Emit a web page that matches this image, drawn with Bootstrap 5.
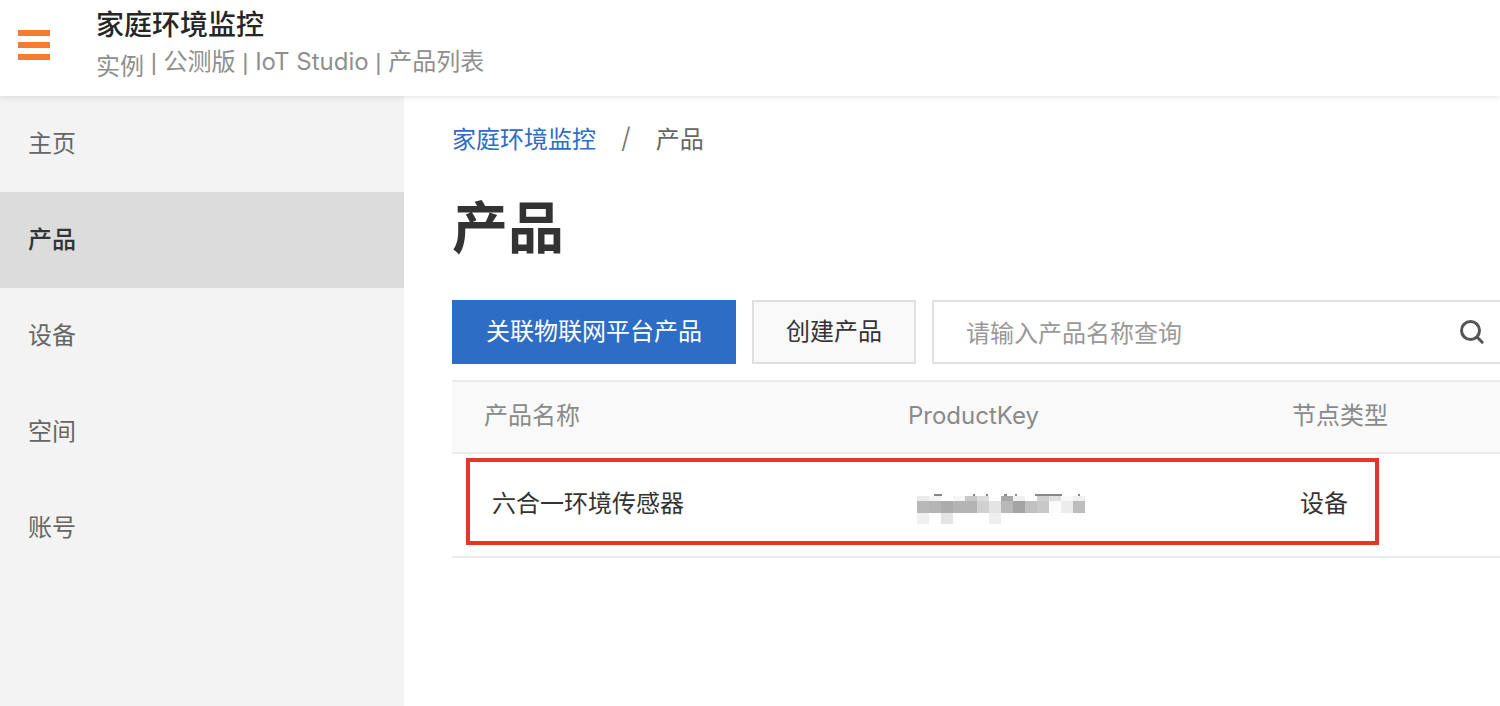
<!DOCTYPE html>
<html lang="zh-CN">
<head>
    <meta charset="UTF-8">
    <meta name="viewport" content="width=device-width, initial-scale=1.0">
    <title>家庭环境监控</title>
    <link rel="stylesheet" href="https://cdn.jsdelivr.net/npm/bootstrap@5.3.2/dist/css/bootstrap.min.css">
    <style>
        html, body { height: 100%; overflow: hidden; }
        body {
            font-family: Inter, "Noto Sans CJK SC", sans-serif;
            font-size: 24px;
            color: #333;
            background: #fff;
        }
        .app-top {
            height: 96px;
            padding-left: 18px;
            background: #fff;
            box-shadow: 0 1px 6px rgba(0, 0, 0, .12);
            position: relative;
        }
        .burger { width: 32px; margin-right: 46px; margin-top: 30px; }
        .burger i { display: block; height: 6px; margin-bottom: 6px; background: #f37b32; }
        .app-head { padding-top: 8px; }
        .app-title { font-size: 28px; line-height: 34px; font-weight: 500; color: #262626; }
        .app-sub { font-family: "Liberation Sans", "Noto Sans CJK SC", sans-serif; font-size: 24px; line-height: 36px; color: #8f8f8f; margin-top: 2px; }
        .app-sub .sub-low { vertical-align: -5px; }
        .app-sub .sub-latin { font-family: Inter, sans-serif; }
        .app-body { height: 610px; }
        .side { width: 404px; background: #f3f3f3; flex: none; }
        .side a { display: block; height: 96px; line-height: 96px; padding-left: 28px; color: #666; text-decoration: none; }
        .side a.on { background: #dcdcdc; color: #333; font-weight: 500; }
        .main-pane { padding-left: 48px; min-width: 0; }
        .crumbs { height: 86px; line-height: 88px; color: #666; }
        .crumbs a { color: #2e6dc5; text-decoration: none; }
        .crumbs em { font-style: normal; font-size: 28px; line-height: 1; font-weight: 300; color: #777; margin: 0 25px; }
        .page-h { font-size: 56px; line-height: 64px; font-weight: 700; color: #333; margin: 14px 0 40px; }
        .tools { height: 64px; gap: 16px; }
        .tools .btn { height: 64px; border-radius: 0; font-size: 24px; padding: 0; }
        .btn-link-prod { width: 284px; background: #2e6dc5; border: 0; color: #fff; }
        .btn-new-prod { width: 164px; background: #f9f9f9; border: 2px solid #e0e0e0; color: #333; }
        .search-box { flex: 1; border: 2px solid #e0e0e0; padding: 0 15px 0 32px; margin-right: -20px; }
        .search-box input { border: 0; outline: 0; flex: 1; min-width: 0; padding: 4px 0 0 0; font-size: 24px; color: #333; background: none; }
        .search-box input::placeholder { color: #999; opacity: 1; }
        .search-ico { margin-right: 18px; }
        .prod-table { margin-top: 16px; font-size: 24px; }
        .prod-head { height: 74px; padding-bottom: 2px; background: #f9f9f9; border-top: 2px solid #ebebeb; border-bottom: 2px solid #ebebeb; color: #8a8a8a; }
        .prod-row { height: 104px; border-bottom: 2px solid #ebebeb; color: #333; position: relative; }
        .cell-a { width: 456px; flex: none; }
        .cell-b { width: 384px; flex: none; }
        .prod-head .cell-a { padding-left: 32px; }
        .prod-row .cell-a { padding-left: 40px; padding-bottom: 2px; }
        .prod-row .cell-b { padding-left: 9px; }
        .prod-row .cell-c { padding-left: 8px; padding-bottom: 2px; }
        .mosaic { display: block; width: 171px; height: 38px; }
        .red-mark { position: absolute; left: 14px; top: 4px; width: 913px; height: 87px; border: 4px solid #e8352a; }
    </style>
</head>
<body>
    <!-- Top bar -->
    <header class="app-top d-flex align-items-start">
        <div class="burger"><i></i><i></i><i></i></div>
        <div class="app-head">
            <div class="app-title">家庭环境监控</div>
            <div class="app-sub"><span class="sub-low">实例</span> | 公测版 | <span class="sub-latin">IoT Studio</span> | 产品列表</div>
        </div>
    </header>

    <div class="app-body d-flex">
        <!-- Sidebar -->
        <nav class="side">
            <a href="#">主页</a>
            <a href="#" class="on">产品</a>
            <a href="#">设备</a>
            <a href="#">空间</a>
            <a href="#">账号</a>
        </nav>

        <!-- Main -->
        <main class="main-pane flex-grow-1">
            <div class="crumbs"><a href="#">家庭环境监控</a><em>/</em>产品</div>
            <h1 class="page-h">产品</h1>

            <div class="tools d-flex">
                <button class="btn btn-link-prod">关联物联网平台产品</button>
                <button class="btn btn-new-prod">创建产品</button>
                <div class="search-box d-flex align-items-center">
                    <input type="text" placeholder="请输入产品名称查询">
                    <svg class="search-ico" width="26" height="26" viewBox="0 0 26 26" fill="none" stroke="#555" stroke-width="3" stroke-linecap="round">
                        <circle cx="11.5" cy="11.5" r="9"/>
                        <path d="M18.2 18.2l5 5"/>
                    </svg>
                </div>
            </div>

            <div class="prod-table">
                <div class="prod-head d-flex align-items-center">
                    <div class="cell-a">产品名称</div>
                    <div class="cell-b">ProductKey</div>
                    <div class="cell-c">节点类型</div>
                </div>
                <div class="prod-row d-flex align-items-center">
                    <div class="cell-a">六合一环境传感器</div>
                    <div class="cell-b">
                        <!-- redacted key, pixelated in the original -->
                        <svg class="mosaic" viewBox="0 0 171 38" shape-rendering="crispEdges">
                            <g fill="#888">
                                <rect x="17" y="8" width="8" height="2"/>
                                <rect x="56" y="8" width="2" height="2"/>
                                <rect x="69" y="8" width="2" height="2"/>
                                <rect x="87" y="8" width="3" height="2"/>
                                <rect x="98" y="8" width="2" height="2"/>
                                <rect x="118" y="8" width="27" height="2"/>
                                <rect x="161" y="8" width="2" height="2"/>
                            </g>
                            <rect x="0" y="10" width="12" height="5" fill="#ebebeb"/>
                            <rect x="12" y="10" width="12" height="5" fill="#f5f5f5"/>
                            <rect x="36" y="10" width="12" height="5" fill="#f5f5f5"/>
                            <rect x="48" y="10" width="12" height="5" fill="#c8c8c8"/>
                            <rect x="60" y="10" width="12" height="5" fill="#dcdcdc"/>
                            <rect x="84" y="10" width="12" height="5" fill="#a8a8a8"/>
                            <rect x="96" y="10" width="12" height="5" fill="#f0f0f0"/>
                            <rect x="120" y="10" width="12" height="5" fill="#d0d0d0"/>
                            <rect x="132" y="10" width="12" height="5" fill="#e0e0e0"/>
                            <rect x="144" y="10" width="12" height="5" fill="#f8f8f8"/>
                            <rect x="156" y="10" width="12" height="5" fill="#f0f0f0"/>
                            <rect x="0" y="15" width="12" height="12" fill="#b8b8b8"/>
                            <rect x="12" y="15" width="12" height="12" fill="#b4b4b4"/>
                            <rect x="24" y="15" width="12" height="12" fill="#acacac"/>
                            <rect x="36" y="15" width="24" height="12" fill="#b4b4b4"/>
                            <rect x="60" y="15" width="12" height="12" fill="#d0d0d0"/>
                            <rect x="72" y="15" width="12" height="12" fill="#e4e4e4"/>
                            <rect x="84" y="15" width="12" height="12" fill="#b8b8b8"/>
                            <rect x="96" y="15" width="12" height="12" fill="#a4a4a4"/>
                            <rect x="108" y="15" width="12" height="12" fill="#c0c0c0"/>
                            <rect x="120" y="15" width="12" height="12" fill="#c8c8c8"/>
                            <rect x="132" y="15" width="12" height="12" fill="#fcfcfc"/>
                            <rect x="144" y="15" width="12" height="12" fill="#ececec"/>
                            <rect x="156" y="15" width="12" height="12" fill="#bcbcbc"/>
                            <rect x="0" y="27" width="12" height="11" fill="#f0f0f0"/>
                            <rect x="24" y="27" width="12" height="11" fill="#e4e4e4"/>
                            <rect x="72" y="27" width="12" height="11" fill="#eee"/>
                        </svg>
                    </div>
                    <div class="cell-c">设备</div>
                    <div class="red-mark"></div>
                </div>
            </div>
        </main>
    </div>

    <script src="https://cdn.jsdelivr.net/npm/bootstrap@5.3.2/dist/js/bootstrap.bundle.min.js"></script>
</body>
</html>
